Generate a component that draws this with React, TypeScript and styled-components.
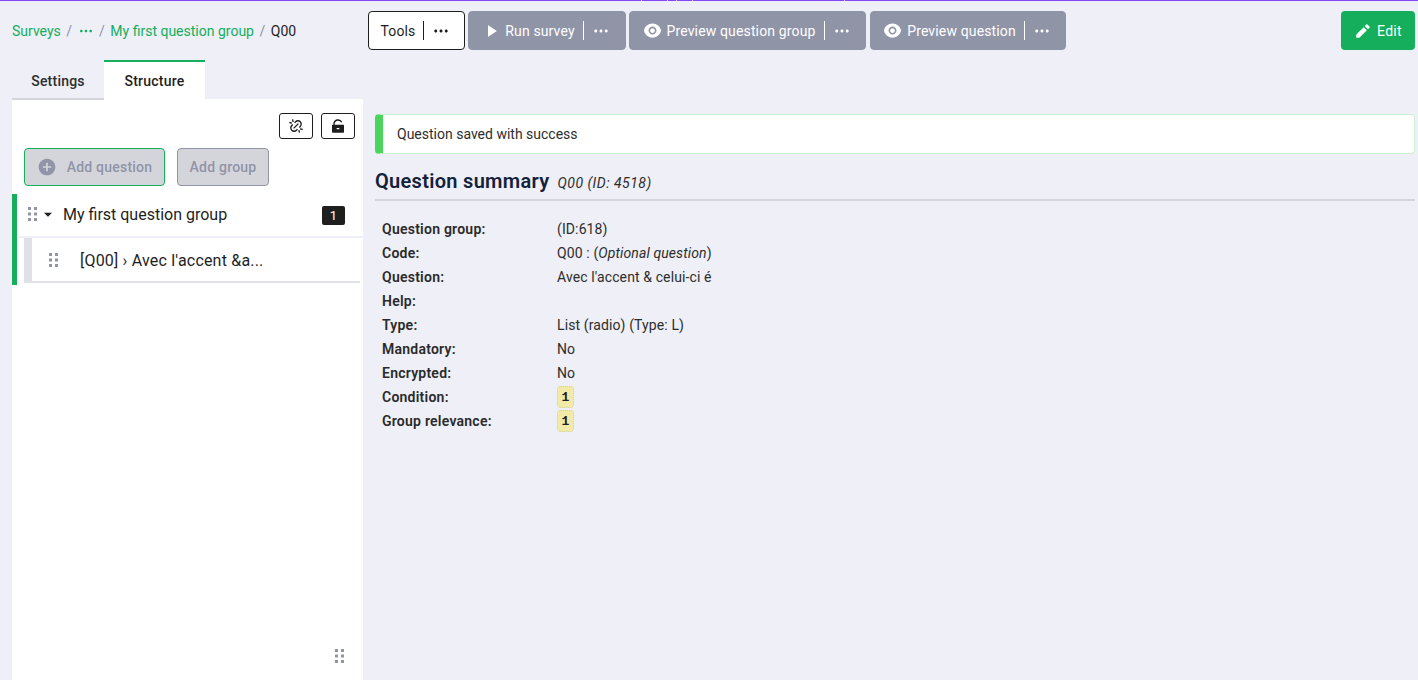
import React from "react";
import styled, { createGlobalStyle } from "styled-components";
import {
  RiPlayFill,
  RiEyeFill,
  RiPencilFill,
  RiMoreFill,
  RiLinkUnlinkM,
  RiLockUnlockFill,
  RiAddCircleFill,
  RiArrowDownSFill,
} from "react-icons/ri";

const Global = createGlobalStyle`
  html, body { margin: 0; padding: 0; background: #eeeff7; }
  body { font-family: Roboto, "Liberation Sans", sans-serif; font-size: 14px; color: #1e1e1e; height: 680px; overflow: hidden; }
  * { box-sizing: border-box; }
`;

const Page = styled.div`
  height: 680px;
  display: flex;
  flex-direction: column;
`;

const TopLine = styled.div`
  height: 1px;
  flex: none;
  background: linear-gradient(
    to right,
    #8146f6 641px, #d9c8fc 641px, #d9c8fc 642px,
    #8146f6 642px, #8146f6 667px, #d9c8fc 667px, #d9c8fc 668px,
    #8146f6 668px, #8146f6 676px, #d9c8fc 676px, #d9c8fc 677px,
    #8146f6 677px, #8146f6 692px, #d9c8fc 692px, #d9c8fc 693px,
    #8146f6 693px, #8146f6 844px, #d9c8fc 844px, #d9c8fc 845px,
    #8146f6 845px
  );
`;

const TopBar = styled.header`
  height: 59px;
  padding: 10px 3px 0 12px;
  display: flex;
  align-items: flex-start;
`;

const Crumbs = styled.nav`
  width: 356px;
  height: 39px;
  display: flex;
  align-items: center;
  font-size: 14px;
`;

const Crumb = styled.a`
  color: #14ae5c;
  display: flex;
  align-items: center;
`;

const CrumbSep = styled.span`
  color: #8f93a6;
  margin: 0 5.5px;
`;

const Group = styled.div`
  display: flex;
  gap: 3px;
`;

const ActionButton = styled.button<{ $variant: "outline" | "muted"; $w: number }>`
  width: ${(p) => p.$w}px;
  height: 39px;
  border-radius: 4px;
  border: 1px solid ${(p) => (p.$variant === "outline" ? "#1e1e1e" : "#9094a7")};
  background: ${(p) => (p.$variant === "outline" ? "#fff" : "#9094a7")};
  color: ${(p) => (p.$variant === "outline" ? "#1e1e1e" : "#fff")};
  font: inherit;
  letter-spacing: 0.01em;
  display: flex;
  align-items: center;
  justify-content: center;
  padding: 0 2px 0 0;
  gap: 5px;
  white-space: nowrap;
  &:last-child {
    margin-left: 1px;
  }
`;

const Divider = styled.span<{ $dark?: boolean }>`
  width: 1px;
  height: 19px;
  background: ${(p) => (p.$dark ? "#1e1e1e" : "#fff")};
  margin: 0 3px;
`;

const EditButton = styled.button`
  margin-left: auto;
  width: 74px;
  height: 39px;
  border: none;
  border-radius: 4px;
  background: #14ae5c;
  color: #fff;
  font: inherit;
  letter-spacing: 0.02em;
  display: flex;
  align-items: center;
  justify-content: center;
  gap: 5px;
  padding: 0;
`;

const Body = styled.div`
  flex: 1;
  min-height: 0;
  display: flex;
  padding-left: 12px;
`;

const Sidebar = styled.aside`
  width: 351px;
  flex: none;
  display: flex;
  flex-direction: column;
`;

const Tabs = styled.div`
  display: flex;
  height: 40px;
`;

const Tab = styled.div<{ $active?: boolean }>`
  width: ${(p) => (p.$active ? 101 : 92)}px;
  padding-top: 2px;
  display: flex;
  align-items: center;
  justify-content: center;
  font-weight: 500;
  letter-spacing: 0.016em;
  background: ${(p) => (p.$active ? "#fff" : "transparent")};
  color: ${(p) => (p.$active ? "#1e1e1e" : "#2d2d2d")};
  border-top: 2px solid ${(p) => (p.$active ? "#14ae5c" : "transparent")};
  border-bottom: 2px solid ${(p) => (p.$active ? "#fff" : "#d4d5db")};
  position: relative;
  z-index: 1;
`;

const Panel = styled.div`
  flex: 1;
  background: #fff;
  position: relative;
  margin-top: -1px;
  display: flex;
  flex-direction: column;
`;

const PanelTools = styled.div`
  display: flex;
  justify-content: flex-end;
  gap: 8px;
  padding: 14px 8px 0 0;
`;

const ToolButton = styled.button`
  width: 34px;
  height: 26px;
  border: 1px solid #1e1e1e;
  border-radius: 3px;
  background: #fff;
  color: #1e1e1e;
  padding: 0;
  display: flex;
  align-items: center;
  justify-content: center;
`;

const AddRow = styled.div`
  display: flex;
  gap: 12px;
  padding: 9px 0 8px 12px;
`;

const AddButton = styled.button<{ $green?: boolean; $w: number }>`
  width: ${(p) => p.$w}px;
  height: 38px;
  border: 1px solid ${(p) => (p.$green ? "#14ae5c" : "#9094a7")};
  border-radius: 4px;
  background: #d4d5db;
  color: #9094a7;
  font: inherit;
  font-weight: 500;
  letter-spacing: 0.016em;
  display: flex;
  align-items: center;
  justify-content: center;
  gap: 10px;
  padding: 0;
`;

const Tree = styled.div`
  border-left: 5px solid #14ae5c;
`;

const GroupRow = styled.div`
  height: 44px;
  display: flex;
  align-items: center;
  padding: 0 18px 2px 8px;
  font-size: 16px;
  color: #1e1e1e;
  border-bottom: 2px solid #eeeff7;
  border-left: 3px solid #fff;
  background: #fff;
`;

const Caret = styled(RiArrowDownSFill)`
  margin-left: 3px;
  flex: none;
`;

const GroupName = styled.span`
  margin-left: 7px;
  flex: 1;
`;

const CountBadge = styled.span`
  width: 23px;
  height: 19px;
  margin-top: 3px;
  border-radius: 2px;
  background: #1e1e1e;
  color: #fff;
  font-size: 13px;
  display: flex;
  align-items: center;
  justify-content: center;
`;

const QuestionRow = styled.div`
  height: 45px;
  margin: 0 3px 2px 7px;
  padding: 1px 0 0 17px;
  border-left: 8px solid #dfe0e8;
  border-bottom: 2px solid #e1e2ea;
  display: flex;
  align-items: center;
  font-size: 16px;
  letter-spacing: 0.012em;
  color: #1e1e1e;
`;

const QuestionName = styled.span`
  margin-left: 22px;
`;

const GripSvg = styled.svg`
  width: 9px;
  height: 14px;
  flex: none;
  color: #9094a7;
`;

const CornerGrip = styled.div`
  position: absolute;
  right: 19px;
  bottom: 17px;
  display: flex;
`;

const Grip = () => (
  <GripSvg viewBox="0 0 9 14" fill="currentColor">
    {[0, 5.5, 11].map((y) =>
      [0, 6].map((x) => <rect key={`${x}-${y}`} x={x} y={y} width="3" height="3" />)
    )}
  </GripSvg>
);

const Main = styled.main`
  flex: 1;
  min-width: 0;
  padding: 54px 3px 0 12px;
`;

const Alert = styled.div`
  height: 40px;
  background: #fff;
  border: 1px solid #c9f1cf;
  border-left: 8px solid #4cd55c;
  border-radius: 4px;
  display: flex;
  align-items: center;
  padding-left: 14px;
  font-size: 14px;
  color: #2d2d2d;
`;

const Heading = styled.div`
  margin-top: 13px;
  height: 34px;
  padding-bottom: 5px;
  border-bottom: 2px solid #d4d5db;
  display: flex;
  align-items: center;
  gap: 8px;
`;

const Title = styled.h2`
  margin: 0;
  font-size: 20px;
  font-weight: 600;
  letter-spacing: 0.015em;
  color: #14213a;
`;

const Sub = styled.em`
  font-size: 14px;
  padding-top: 5px;
  color: #2d2d2d;
  letter-spacing: 0.035em;
`;

const Summary = styled.dl`
  margin: 16px 0 0 7px;
  display: grid;
  grid-template-columns: 175px 1fr;
  grid-auto-rows: 24px;
  align-items: center;
  font-size: 14px;
`;

const Term = styled.dt`
  font-weight: 600;
  color: #2a2a2a;
  letter-spacing: 0.017em;
`;

const Value = styled.dd`
  margin: 0;
  color: #2d2d2d;
  letter-spacing: 0.008em;
`;

const Code = styled.code`
  display: inline-flex;
  align-items: center;
  justify-content: center;
  width: 17px;
  height: 22px;
  border: 1px dotted #d8d39c;
  border-radius: 4px;
  background: #f1eaa9;
  font-family: "Liberation Mono", monospace;
  font-weight: 700;
  font-size: 13px;
  color: #222;
  vertical-align: middle;
`;

const rows: [string, React.ReactNode][] = [
  ["Question group:", "(ID:618)"],
  ["Code:", <>Q00 : (<i>Optional question</i>)</>],
  ["Question:", "Avec l'accent & celui-ci é"],
  ["Help:", ""],
  ["Type:", "List (radio) (Type: L)"],
  ["Mandatory:", "No"],
  ["Encrypted:", "No"],
  ["Condition:", <Code>1</Code>],
  ["Group relevance:", <Code>1</Code>],
];

export default function App() {
  return (
    <Page>
      <Global />
      <TopLine />
      <TopBar>
        <Crumbs>
          <Crumb>Surveys</Crumb>
          <CrumbSep>/</CrumbSep>
          <Crumb><RiMoreFill size={16} /></Crumb>
          <CrumbSep>/</CrumbSep>
          <Crumb>My first question group</Crumb>
          <CrumbSep>/</CrumbSep>
          <span>Q00</span>
        </Crumbs>
        <Group>
          <ActionButton $variant="outline" $w={97}>
            Tools
            <Divider $dark />
            <RiMoreFill size={18} />
          </ActionButton>
          <ActionButton $variant="muted" $w={158}>
            <RiPlayFill size={18} />
            Run survey
            <Divider />
            <RiMoreFill size={18} />
          </ActionButton>
          <ActionButton $variant="muted" $w={237}>
            <RiEyeFill size={19} />
            Preview question group
            <Divider />
            <RiMoreFill size={18} />
          </ActionButton>
          <ActionButton $variant="muted" $w={196}>
            <RiEyeFill size={19} />
            Preview question
            <Divider />
            <RiMoreFill size={18} />
          </ActionButton>
        </Group>
        <EditButton>
          <RiPencilFill size={18} />
          Edit
        </EditButton>
      </TopBar>
      <Body>
        <Sidebar>
          <Tabs>
            <Tab>Settings</Tab>
            <Tab $active>Structure</Tab>
          </Tabs>
          <Panel>
            <PanelTools>
              <ToolButton><RiLinkUnlinkM size={16} /></ToolButton>
              <ToolButton><RiLockUnlockFill size={16} /></ToolButton>
            </PanelTools>
            <AddRow>
              <AddButton $green $w={141}>
                <RiAddCircleFill size={20} />
                Add question
              </AddButton>
              <AddButton $w={92}>Add group</AddButton>
            </AddRow>
            <Tree>
              <GroupRow>
                <Grip />
                <Caret size={16} />
                <GroupName>My first question group</GroupName>
                <CountBadge>1</CountBadge>
              </GroupRow>
              <QuestionRow>
                <Grip />
                <QuestionName>[Q00] › Avec l'accent &amp;a...</QuestionName>
              </QuestionRow>
            </Tree>
            <CornerGrip><Grip /></CornerGrip>
          </Panel>
        </Sidebar>
        <Main>
          <Alert>Question saved with success</Alert>
          <Heading>
            <Title>Question summary</Title>
            <Sub>Q00 (ID: 4518)</Sub>
          </Heading>
          <Summary>
            {rows.map(([k, v]) => (
              <React.Fragment key={k}>
                <Term>{k}</Term>
                <Value>{v}</Value>
              </React.Fragment>
            ))}
          </Summary>
        </Main>
      </Body>
    </Page>
  );
}
